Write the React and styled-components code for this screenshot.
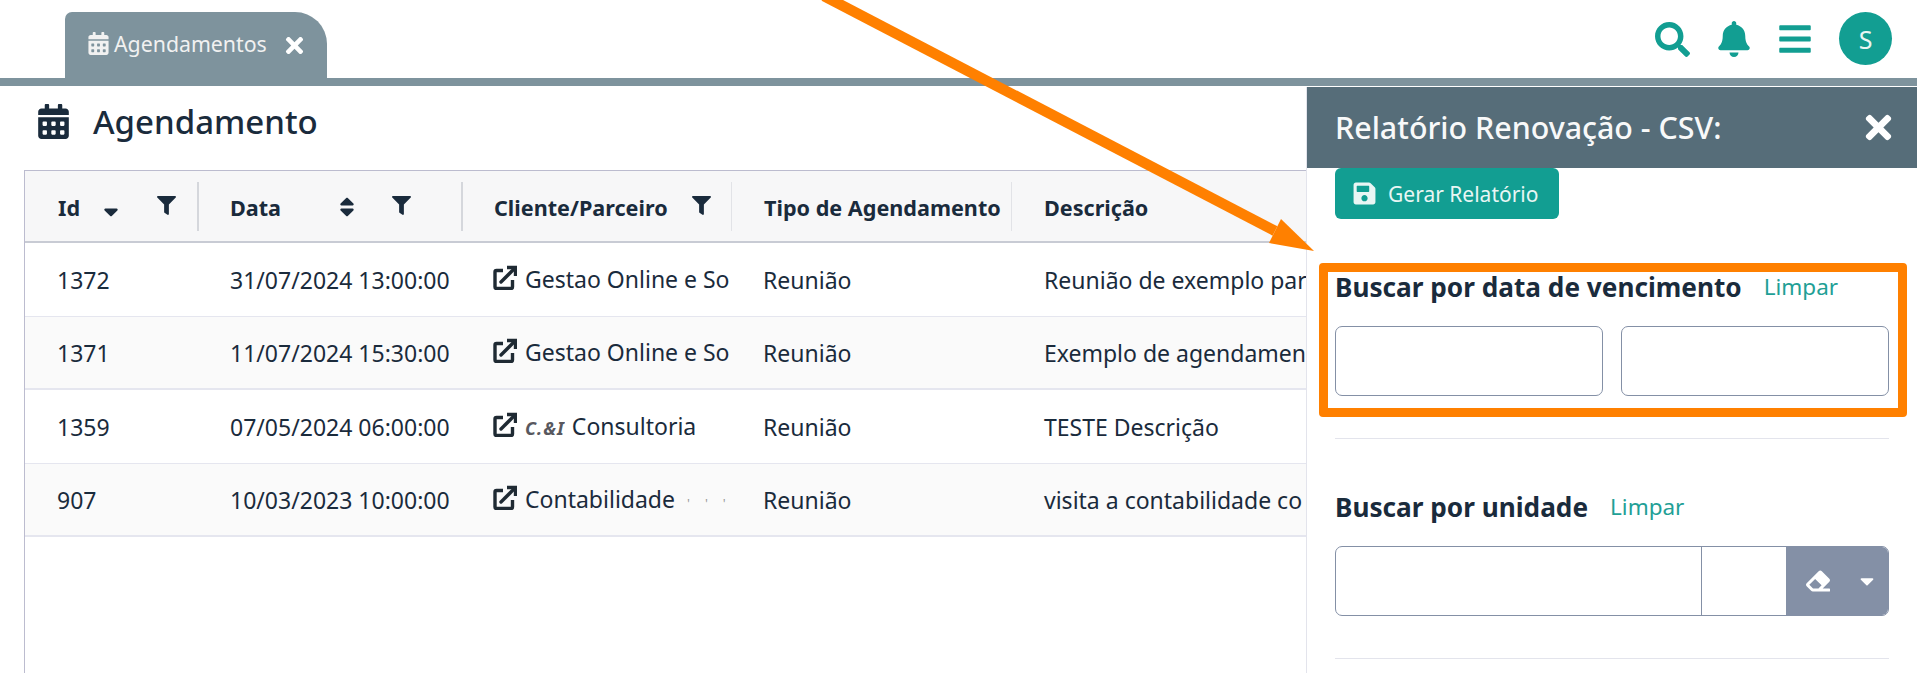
import React from "react";
import styled, { createGlobalStyle } from "styled-components";
import {
  FaCalendarAlt, FaTimes, FaFilter, FaSortDown, FaSort, FaSearch, FaBell, FaBars, FaSave, FaEraser, FaCaretDown,
} from "react-icons/fa";

const Global = createGlobalStyle`
  html, body { margin: 0; padding: 0; background: #fff; overflow: hidden; }
  body { font-family: "Noto Sans", "Open Sans", sans-serif; color: #1a2b3c; }
  * { box-sizing: border-box; }
`;

const Page = styled.div`
  position: relative;
  width: 100%;
  height: 100vh;
  overflow: hidden;
  display: flex;
  flex-direction: column;
`;

const TopBar = styled.header`
  height: 78px;
  flex: none;
  display: flex;
  justify-content: space-between;
  padding: 12px 25px 0 65px;
`;

const Tab = styled.div`
  width: 262px;
  height: 66px;
  background: #7e939d;
  border-radius: 7px 32px 0 0;
  color: #f1f1f1;
  display: flex;
  align-items: center;
  padding: 0 0 4px 22px;
  font-size: 21.300px;
  svg { flex: none; }
`;

const TabLabel = styled.span`
  margin-left: 4px;
`;

const TabClose = styled(FaTimes)`
  margin-left: 15px;
  margin-top: 4px;
  color: #fff;
`;

const Tools = styled.div`
  display: flex;
  align-items: flex-start;
  color: #129e92;
`;

const ToolIcon = styled.span`
  display: flex;
  margin-top: ${(p) => p.$top}px;
  margin-right: ${(p) => p.$gap}px;
`;

const BellIcon = styled(FaBell)`
  width: 32px;
  height: 36px;
`;

const Avatar = styled.div`
  width: 53px;
  height: 53px;
  border-radius: 50%;
  background: #129e92;
  color: #e8f6f4;
  font-size: 25px;
  display: flex;
  align-items: center;
  justify-content: center;
`;

const AccentBar = styled.div`
  height: 8px;
  flex: none;
  background: #7e939d;
`;

const Content = styled.main`
  flex: 1;
  min-height: 0;
  display: flex;
  flex-direction: column;
  padding: 18px 0 0 24px;
`;

const TitleRow = styled.div`
  display: flex;
  align-items: center;
  height: 35px;
  padding-left: 12px;
  margin-bottom: 31px;
  color: #1a2b3c;
`;

const Title = styled.h1`
  margin: 0 0 0 22px;
  font-size: 33px;
  font-weight: 500;
  line-height: 40px;
`;

const TableFrame = styled.div`
  flex: 1;
  border-left: 1px solid #bcbccf;
  border-top: 1px solid #bcbccf;
  overflow: hidden;
`;

const Table = styled.table`
  table-layout: fixed;
  width: 1282px;
  border-collapse: separate;
  border-spacing: 0;
  font-size: 23px;
`;

const HeadCell = styled.th`
  height: 72px;
  padding: 0;
  background: #f7f7f8;
  border-bottom: 2px solid #c8cbd4;
  text-align: left;
  font-weight: 700;
  font-size: 21.600px;
`;

const HeadInner = styled.div`
  height: 49px;
  display: flex;
  align-items: center;
  padding-left: ${(p) => p.$pad}px;
  margin-top: 1px;
  border-right: ${(p) => p.$sep}px solid ${(p) => (p.$sep > 1 ? "#d5d7dc" : "#e2e3e7")};
  white-space: nowrap;
`;

const HeadLabel = styled.span`
  width: ${(p) => (p.$w ? `${p.$w}px` : "auto")};
  flex: none;
  padding-top: 2px;
`;

const SortSlot = styled.span`
  display: flex;
  width: 14px;
  justify-content: center;
  svg { flex: none; }
`;

const FilterSlot = styled.span`
  display: flex;
  margin-left: ${(p) => p.$ml}px;
  margin-top: -3px;
`;

const Row = styled.tr`
  background: ${(p) => (p.$alt ? "#fafafa" : "#fff")};
`;

const Cell = styled.td`
  height: 73.5px;
  padding: 2px 0 0 ${(p) => p.$pad}px;
  border-bottom: ${(p) => (p.$thick ? 2 : 1)}px solid #e5e6ef;
  white-space: nowrap;
  overflow: hidden;
`;

const ClientLink = styled.span`
  display: inline-flex;
  align-items: center;
  gap: 8px;
  svg { flex: none; margin-top: -3px; }
`;

const Blurred = styled.span`
  font-size: 18px;
  font-weight: 700;
  font-style: italic;
  color: #3c3c44;
  opacity: 0.85;
  letter-spacing: 1px;
  margin-right: 7px;
`;

const Ghost = styled.span`
  color: #9a9a9a;
  font-size: 13px;
  letter-spacing: 15px;
  margin-left: 12px;
  margin-right: -15px;
`;

const Drawer = styled.aside`
  position: absolute;
  top: 87px;
  left: 1306px;
  right: 0;
  bottom: 0;
  background: #fff;
  border-left: 1px solid #e3e4ec;
  display: flex;
  flex-direction: column;
`;

const DrawerHead = styled.div`
  height: 81px;
  flex: none;
  background: #566d79;
  color: #fff;
  display: flex;
  align-items: center;
  justify-content: space-between;
  padding: 0 20px 0 28px;
`;

const DrawerTitle = styled.h2`
  margin: 0;
  font-size: 30.400px;
  font-weight: 500;
  color: #f8f9f9;
`;

const DrawerBody = styled.div`
  padding: 0 28px;
`;

const PrimaryButton = styled.button`
  width: 224px;
  height: 51px;
  border: 0;
  border-radius: 6px;
  background: #129e92;
  color: #e9f6f4;
  font: 400 21px "Noto Sans", sans-serif;
  display: flex;
  align-items: center;
  gap: 11px;
  padding: 0 0 0 17px;
  svg { flex: none; }
`;

const FilterSection = styled.section`
  position: relative;
  margin-top: ${(p) => p.$top}px;
  padding-bottom: 42px;
  border-bottom: 1px solid #e3e4ec;
`;

const Highlight = styled.div`
  position: absolute;
  top: -10px;
  left: -16px;
  right: -18px;
  height: 154px;
  border: 9px solid #ff8000;
  border-radius: 4px;
  pointer-events: none;
`;

const LabelRow = styled.div`
  height: 30px;
  margin-bottom: 23px;
  padding-bottom: 3px;
  display: flex;
  align-items: center;
  gap: 22px;
`;

const FilterLabel = styled.span`
  font-size: 26.200px;
  font-weight: 700;
  color: #1a2b3c;
`;

const ClearLink = styled.a`
  font-size: 22.500px;
  color: #1fa096;
`;

const DateGrid = styled.div`
  display: grid;
  grid-template-columns: 1fr 1fr;
  gap: 18px;
`;

const DateInput = styled.input`
  height: 70px;
  width: 100%;
  border: 1px solid #8490a6;
  border-radius: 7px;
  background: #fff;
`;

const SelectGroup = styled.div`
  height: 70px;
  display: flex;
  border: 1px solid #8490a6;
  border-radius: 7px;
  overflow: hidden;
`;

const SelectValue = styled.div`
  width: 366px;
  border-right: 1px solid #8490a6;
`;

const SelectSpacer = styled.div`
  width: 84px;
`;

const SelectActions = styled.div`
  flex: 1;
  background: #8490a6;
  color: #fff;
  display: flex;
  align-items: center;
  gap: 26px;
  padding-left: 20px;
`;

const ArrowOverlay = styled.svg`
  position: absolute;
  inset: 0;
  width: 100%;
  height: 100%;
  pointer-events: none;
`;

const ExternalIcon = () => (
  <svg width="24" height="25" viewBox="0 0 24 25" fill="none" stroke="#1f2a33" strokeWidth="3.400">
    <path d="M10 5.500H3.500a1.500 1.500 0 0 0-1.500 1.500V22a1.500 1.500 0 0 0 1.500 1.500H18a1.500 1.500 0 0 0 1.500-1.500V15" />
    <path d="M8 17L21 4" strokeLinecap="round" />
    <path d="M14 2.500H22.500V11" />
  </svg>
);

const rows = [
  { id: "1372", date: "31/07/2024 13:00:00", client: "Gestao Online e So", desc: "Reunião de exemplo par" },
  { id: "1371", date: "11/07/2024 15:30:00", client: "Gestao Online e So", desc: "Exemplo de agendament" },
  { id: "1359", date: "07/05/2024 06:00:00", client: "Consultoria", blurred: "C.&I", desc: "TESTE Descrição" },
  { id: "907", date: "10/03/2023 10:00:00", client: "Contabilidade", ghost: "'''", desc: "visita a contabilidade co" },
];

export default function App() {
  return (
    <Page>
      <Global />
      <TopBar>
        <Tab>
          <FaCalendarAlt size={23} />
          <TabLabel>Agendamentos</TabLabel>
          <TabClose size={25} />
        </Tab>
        <Tools>
          <ToolIcon $top={10} $gap={28}><FaSearch size={35} /></ToolIcon>
          <ToolIcon $top={9} $gap={27}><BellIcon /></ToolIcon>
          <ToolIcon $top={9} $gap={26}><FaBars size={36} /></ToolIcon>
          <Avatar>S</Avatar>
        </Tools>
      </TopBar>
      <AccentBar />
      <Content>
        <TitleRow>
          <FaCalendarAlt size={35} />
          <Title>Agendamento</Title>
        </TitleRow>
        <TableFrame>
          <Table>
            <colgroup>
              <col style={{ width: 174 }} />
              <col style={{ width: 264 }} />
              <col style={{ width: 269 }} />
              <col style={{ width: 280 }} />
              <col />
            </colgroup>
            <thead>
              <tr>
                <HeadCell>
                  <HeadInner $pad={33} $sep={2}>
                    <HeadLabel $w={46}>Id</HeadLabel>
                    <SortSlot><FaSortDown size={24} /></SortSlot>
                    <FilterSlot $ml={39}><FaFilter size={19} /></FilterSlot>
                  </HeadInner>
                </HeadCell>
                <HeadCell>
                  <HeadInner $pad={31} $sep={2}>
                    <HeadLabel $w={110}>Data</HeadLabel>
                    <SortSlot><FaSort size={24} /></SortSlot>
                    <FilterSlot $ml={38}><FaFilter size={19} /></FilterSlot>
                  </HeadInner>
                </HeadCell>
                <HeadCell>
                  <HeadInner $pad={31} $sep={1}>
                    <HeadLabel $w={198}>Cliente/Parceiro</HeadLabel>
                    <FilterSlot $ml={0}><FaFilter size={19} /></FilterSlot>
                  </HeadInner>
                </HeadCell>
                <HeadCell>
                  <HeadInner $pad={32} $sep={1}>
                    <HeadLabel>Tipo de Agendamento</HeadLabel>
                  </HeadInner>
                </HeadCell>
                <HeadCell>
                  <HeadInner $pad={32} $sep={0}>
                    <HeadLabel>Descrição</HeadLabel>
                  </HeadInner>
                </HeadCell>
              </tr>
            </thead>
            <tbody>
              {rows.map((r, i) => (
                <Row key={r.id} $alt={i % 2 === 1}>
                  <Cell $pad={32} $thick={i % 2 === 1}>{r.id}</Cell>
                  <Cell $pad={31} $thick={i % 2 === 1}>{r.date}</Cell>
                  <Cell $pad={30} $thick={i % 2 === 1}>
                    <ClientLink>
                      <ExternalIcon />
                      <span>
                        {r.blurred && <Blurred>{r.blurred}</Blurred>}
                        {r.client}
                        {r.ghost && <Ghost>{r.ghost}</Ghost>}
                      </span>
                    </ClientLink>
                  </Cell>
                  <Cell $pad={31} $thick={i % 2 === 1}>Reunião</Cell>
                  <Cell $pad={32} $thick={i % 2 === 1}>{r.desc}</Cell>
                </Row>
              ))}
            </tbody>
          </Table>
        </TableFrame>
      </Content>
      <Drawer>
        <DrawerHead>
          <DrawerTitle>Relatório Renovação - CSV:</DrawerTitle>
          <FaTimes size={37} />
        </DrawerHead>
        <DrawerBody>
          <PrimaryButton>
            <FaSave size={25} />
            Gerar Relatório
          </PrimaryButton>
          <FilterSection $top={54}>
            <LabelRow>
              <FilterLabel>Buscar por data de vencimento</FilterLabel>
              <ClearLink>Limpar</ClearLink>
            </LabelRow>
            <DateGrid>
              <DateInput />
              <DateInput />
            </DateGrid>
            <Highlight />
          </FilterSection>
          <FilterSection $top={54}>
            <LabelRow>
              <FilterLabel>Buscar por unidade</FilterLabel>
              <ClearLink>Limpar</ClearLink>
            </LabelRow>
            <SelectGroup>
              <SelectValue />
              <SelectSpacer />
              <SelectActions>
                <FaEraser size={24} />
                <FaCaretDown size={22} />
              </SelectActions>
            </SelectGroup>
          </FilterSection>
        </DrawerBody>
      </Drawer>
      <ArrowOverlay viewBox="0 0 1917 673">
        <line x1="824" y1="-4" x2="1275" y2="231" stroke="#ff8000" strokeWidth="10.500" />
        <polygon points="1314,251 1281,219 1269,243" fill="#ff8000" />
      </ArrowOverlay>
    </Page>
  );
}
